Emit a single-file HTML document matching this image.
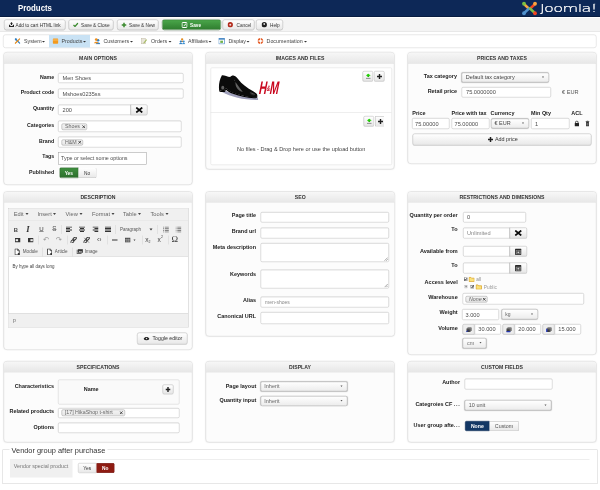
<!DOCTYPE html>
<html lang="en">
<head>
<meta charset="utf-8">
<title>Products</title>
<style>
*{box-sizing:border-box;margin:0;padding:0}
html,body{width:600px;height:490px;overflow:hidden;background:#fff}
body{font-family:"Liberation Sans",Arial,sans-serif;color:#333}
#cv{position:absolute;left:0;top:0;width:1200px;height:980px;transform:scale(.5);transform-origin:0 0;font-size:10.6px;line-height:1;background:#fff}
#cv *{position:absolute;white-space:nowrap}
.hdr{background:#0d2857;border-bottom:2px solid #081c40}
.ttl{font-size:16.6px;font-weight:bold;color:#fff;transform:scaleX(.945);transform-origin:0 0}
.sub{background:#f4f4f4;border-bottom:1px solid #dcdcdc}
.btn{border:1px solid #b0b0b0;border-radius:4.5px;background:linear-gradient(#fff,#e8e8e8);box-shadow:0 1px 1px rgba(0,0,0,.12);font-size:9.45px;color:#333;line-height:19px}
.btn.g{background:linear-gradient(#4aa64a,#2f7d2f);border-color:#2a6d2a;color:#fff;font-weight:bold}
.menu{background:#fff;border:1px solid #d0d0d0;border-radius:5px}
.mi{font-size:10.6px;color:#444}
.mhl{background:#c9e2f4}
.car{width:0;height:0;border-left:3px solid transparent;border-right:3px solid transparent;border-top:3.5px solid #333}
.pn{background:#fcfcfc;border:1px solid #cecece;border-radius:7px;box-shadow:0 0 3px rgba(0,0,0,.06)}
.ph{left:0;top:0;right:0;height:22.5px;background:linear-gradient(#f7f7f7,#e7e7e7);border-bottom:1px solid #cfcfcf;border-radius:6px 6px 0 0;text-align:center;font-weight:bold;font-size:10.3px;line-height:22.5px;color:#333}
.lb{font-weight:bold;color:#222;text-align:right}
.in{background:#fff;border:1px solid #bdbdbd;border-radius:3px;box-shadow:inset 0 1px 1px rgba(0,0,0,.06);font-size:11.3px;color:#4d4d4d;padding-left:8px}
.in.dk{border-color:#9a9a9a;border-radius:0}
.sel{background:linear-gradient(#fff,#ececec);border:1px solid #9c9c9c;border-radius:4px;font-size:11px;color:#444;padding-left:9px;box-shadow:0 0 2px rgba(0,0,0,.25)}
.sel i{right:9px;width:0;height:0;border-left:2.5px solid transparent;border-right:2.5px solid transparent;border-top:3.5px solid #555}
.ab{border:1px solid #b5b5b5;border-radius:0 3px 3px 0;background:linear-gradient(#fff,#e6e6e6);box-shadow:0 1px 1px rgba(0,0,0,.1)}
.tag{border:1px solid #999;border-radius:3px;background:linear-gradient(#f4f4f4,#e6e6e6);font-size:10.6px;color:#666;padding-left:6px}
.yn{border:1px solid #b9b9b9;background:linear-gradient(#fff,#e8e8e8);font-size:9.6px;color:#333;text-align:center}
.ib{background:#fff;border:1px solid #dcdcdc;border-radius:3px}
</style>
</head>
<body>
<div id="cv">
<div class="hdr" style="left:0px;top:0px;width:1200px;height:34px;"></div>
<div class="ttl" style="left:36px;top:9px">Products</div>
<svg style="left:1042px;top:2px" width="34" height="30" viewBox="0 0 34 30">
 <g fill="none" stroke-width="4.8" stroke-linecap="round">
  <path d="M8 8 L16 15.500" stroke="#f9a541"/><path d="M26 8 L18 15.500" stroke="#f44321"/>
  <path d="M8 22.500 L16 15" stroke="#5091cd"/><path d="M26 22.500 L18 15" stroke="#7ac143"/>
 </g>
 <circle cx="6" cy="5.500" r="3.800" fill="#7ac143"/><circle cx="28" cy="5.500" r="3.800" fill="#f9a541"/>
 <circle cx="6" cy="24.500" r="3.800" fill="#5091cd"/><circle cx="28" cy="24.500" r="3.800" fill="#f44321"/>
</svg>
<div style="left:1080px;top:6px;font-family:'DejaVu Sans Light','DejaVu Sans',sans-serif;font-weight:200;font-size:22px;color:#fff;letter-spacing:-.9px;-webkit-text-stroke:.45px #fff;transform:scaleX(1.47);transform-origin:0 0">Joomla!</div>
<div style="left:1187px;top:6px;font-size:5px;color:#fff">®</div>
<div class="sub" style="left:0px;top:36.4px;width:1200px;height:28px;"></div>
<div class="btn" style="left:8px;top:39px;width:123px;height:21px"><svg style="left:9px;top:4px" width="10" height="10" viewBox="0 0 10 10"><path d="M5 0l3 3.500H6V6H4V3.500H2z" fill="#222"/><path d="M0 5.500h2.500V8h5V5.500H10V10H0z" fill="#222"/></svg><span style="left:22px;top:0">Add to cart HTML link</span></div>
<div class="btn" style="left:137px;top:39px;width:90px;height:21px"><svg style="left:8px;top:5px" width="11" height="9" viewBox="0 0 11 9"><path d="M1 5l3 3 6-7" fill="none" stroke="#3a8a2e" stroke-width="2.4"/></svg><span style="left:24px;top:0">Save &amp; Close</span></div>
<div class="btn" style="left:234px;top:39px;width:83px;height:21px"><svg style="left:8px;top:5px" width="10" height="10" viewBox="0 0 10 10"><path d="M5 0v10M0 5h10" stroke="#3a8a2e" stroke-width="3"/></svg><span style="left:23px;top:0">Save &amp; New</span></div>
<div class="btn g" style="left:324px;top:39px;width:118px;height:21px"><svg style="left:38px;top:4px" width="12" height="12" viewBox="0 0 12 12"><rect x="1" y="1" width="10" height="10" rx="1.5" fill="none" stroke="#fff" stroke-width="2"/><path d="M4 7l5-5 1.500 1.500-5 5H4z" fill="#fff" stroke="#3a8a3a" stroke-width=".8"/></svg><span style="left:55px;top:0">Save</span></div>
<div class="btn" style="left:445px;top:39px;width:64px;height:21px"><svg style="left:9px;top:4px" width="11" height="11" viewBox="0 0 11 11"><circle cx="5.500" cy="5.500" r="5.300" fill="#b12a1c"/><circle cx="5.500" cy="5.500" r="2" fill="#f3d9d5"/></svg><span style="left:27px;top:0">Cancel</span></div>
<div class="btn" style="left:512px;top:39px;width:54px;height:21px"><svg style="left:10px;top:4px" width="11" height="11" viewBox="0 0 11 11"><circle cx="5.500" cy="5.500" r="5.300" fill="#222"/><circle cx="5.500" cy="4" r="1.800" fill="#ddd"/></svg><span style="left:27px;top:0">Help</span></div>
<div class="menu" style="left:6px;top:68.6px;width:1187px;height:27.4px;"></div>
<div class="mhl" style="left:98.4px;top:69.6px;width:81.6px;height:25.4px;"></div>
<svg style="left:29px;top:76px" width="12" height="12" viewBox="0 0 14 14"><path d="M3 3l9 9" stroke="#2f7fc4" stroke-width="3" stroke-linecap="round"/><path d="M12 2L3 11" stroke="#e28b1f" stroke-width="2.800" stroke-linecap="round"/><circle cx="3" cy="3" r="2.600" fill="#2f7fc4"/><circle cx="2" cy="12" r="1.600" fill="#e28b1f"/></svg>
<div class="mi" style="left:48px;top:77px">System</div><div class="car" style="left:84px;top:82px"></div>
<svg style="left:105px;top:76px" width="12" height="12" viewBox="0 0 13 13"><rect x=".5" y="1" width="12" height="11.500" rx="2" fill="#f39a1d"/><rect x=".5" y="3.600" width="12" height="1.400" fill="#ffd08a"/></svg>
<div class="mi" style="left:123px;top:77px">Products</div><div class="car" style="left:166px;top:82px"></div>
<svg style="left:188px;top:76px" width="12.500" height="12.500" viewBox="0 0 14 14"><circle cx="9" cy="5" r="3" fill="#2f7fc4"/><path d="M4 14c0-5.500 10-5.500 10 0z" fill="#2f7fc4"/><circle cx="5" cy="3.500" r="3" fill="#ef8f1c"/><path d="M0 12c0-5 10-5 10 0z" fill="#ef8f1c"/></svg>
<div class="mi" style="left:207px;top:77px">Customers</div><div class="car" style="left:260px;top:82px"></div>
<svg style="left:282px;top:76px" width="12.500" height="12.500" viewBox="0 0 14 14"><rect x="1" y="1" width="9" height="12" fill="#e9e6da" stroke="#b9b49c" stroke-width="1"/><path d="M5 11l7-8 1.500 1.500-7 8z" fill="#9db652"/></svg>
<div class="mi" style="left:302px;top:77px">Orders</div><div class="car" style="left:337px;top:82px"></div>
<svg style="left:358px;top:76px" width="12.500" height="12.500" viewBox="0 0 14 14"><circle cx="7" cy="3" r="2.600" fill="#e28b1f"/><path d="M3 9c0-4 8-4 8 0z" fill="#e28b1f"/><circle cx="4" cy="8" r="2.400" fill="#2f7fc4"/><path d="M0 14c0-4 8-4 8 0z" fill="#2f7fc4"/><circle cx="10.500" cy="8" r="2.400" fill="#3d8fd1"/><path d="M7 14c0-4 7-4 7 0z" fill="#3d8fd1"/></svg>
<div class="mi" style="left:376px;top:77px">Affiliates</div><div class="car" style="left:417px;top:82px"></div>
<svg style="left:437px;top:76px" width="12.500" height="12.500" viewBox="0 0 14 14"><rect x=".7" y=".7" width="12.600" height="12.600" fill="#fff" stroke="#3b7fc0" stroke-width="1.400"/><rect x=".7" y=".7" width="12.600" height="3" fill="#3b7fc0"/><rect x="4" y="6" width="6" height="5" fill="#6fb24a"/></svg>
<div class="mi" style="left:457px;top:77px">Display</div><div class="car" style="left:493px;top:82px"></div>
<svg style="left:515px;top:76px" width="12" height="12" viewBox="0 0 13 13"><circle cx="6.500" cy="6.500" r="4.600" fill="none" stroke="#e5602b" stroke-width="3.400"/><path d="M6.500 0v13M0 6.500h13" stroke="#fff" stroke-width="1.600"/></svg>
<div class="mi" style="left:533px;top:77px;letter-spacing:.1px">Documentation</div><div class="car" style="left:608px;top:82px"></div>
<div class="pn" style="left:7px;top:104px;width:378px;height:266px;"><div class="ph">MAIN OPTIONS</div></div>
<div class="lb" style="right:1091.6px;top:147.55px;font-size:10.5px;">Name</div>
<div class="in" style="left:116px;top:146px;width:251px;height:20px;line-height:18.0px;">Men Shoes</div>
<div class="lb" style="right:1091.6px;top:179.15px;font-size:10.5px;">Product code</div>
<div class="in" style="left:116px;top:177px;width:251px;height:20px;line-height:18.0px;">Mshoes0235ss</div>
<div class="lb" style="right:1091.6px;top:210.75px;font-size:10.5px;">Quantity</div>
<div class="in" style="left:116px;top:209px;width:146px;height:21px;line-height:19.0px;border-radius:3px 0 0 3px">200</div>
<div class="ab" style="left:261px;top:209px;width:34px;height:21px;"><svg style="left:9px;top:4px" width="15" height="12" viewBox="0 0 15 12"><path d="M1.500 1.200l12 9.600M13.500 1.200l-12 9.600" stroke="#0a0a0a" stroke-width="3.600"/></svg></div>
<div class="lb" style="right:1091.6px;top:244.15px;font-size:10.5px;">Categories</div>
<div class="in" style="left:116px;top:241px;width:247px;height:23px;line-height:21.0px;"></div>
<div class="tag" style="left:123px;top:247.4px;width:51px;height:12.6px;line-height:9.0px;">Shoes<svg style="right:2.500px;top:1.8px" width="7" height="7" viewBox="0 0 7 7"><path d="M.8.800l5.400 5.400M6.200.800L.8 6.200" stroke="#2a2a2a" stroke-width="1.500"/></svg></div>
<div class="lb" style="right:1091.6px;top:276.75px;font-size:10.5px;">Brand</div>
<div class="in" style="left:116px;top:273px;width:247px;height:22px;line-height:20.0px;"></div>
<div class="tag" style="left:123px;top:278.8px;width:43px;height:12.4px;line-height:8.8px;">H&amp;M<svg style="right:2.500px;top:1.7px" width="7" height="7" viewBox="0 0 7 7"><path d="M.8.800l5.400 5.400M6.200.800L.8 6.200" stroke="#2a2a2a" stroke-width="1.500"/></svg></div>
<div class="lb" style="right:1091.6px;top:307.15px;font-size:10.5px;">Tags</div>
<div class="in dk" style="left:116px;top:304px;width:176.6px;height:25px;line-height:23.0px;padding-left:5px;font-size:10.700px">Type or select some options</div>
<div class="lb" style="right:1091.6px;top:339.15px;font-size:10.5px;">Published</div>
<div class="yn" style="left:118.6px;top:335px;width:38px;height:21px;border-radius:3px 0 0 3px;background:linear-gradient(#3f8f3f,#2b6f2b);border-color:#245f24;color:#fff;font-weight:bold;line-height:19px">Yes</div>
<div class="yn" style="left:156.6px;top:335px;width:36px;height:21px;border-radius:0 3px 3px 0;border-left:0;line-height:19px">No</div>
<div class="pn" style="left:411px;top:104px;width:378px;height:235px;"><div class="ph">IMAGES AND FILES</div></div>
<div class="ib" style="left:420.6px;top:135px;width:363px;height:195px;"></div>
<div class="" style="left:421px;top:223.6px;width:362px;height:1px;background:#dcdcdc"></div>
<svg style="left:428px;top:140px" width="100" height="70" viewBox="0 0 600 420">
<defs><filter id="bl" x="-20%" y="-50%" width="140%" height="200%"><feGaussianBlur stdDeviation="9"/></filter><filter id="b2" x="-30%" y="-30%" width="160%" height="160%"><feGaussianBlur stdDeviation="7"/></filter></defs>
<path d="M120 240 C200 285 380 330 525 328 L530 360 C380 366 200 322 100 268Z" fill="#2a2a66" opacity=".45" filter="url(#bl)"/>
<path d="M95 62 C120 58 160 80 195 84 C205 72 220 64 240 68 C262 74 280 96 296 118 C330 165 390 212 470 256 C500 272 522 290 520 308 C518 326 500 332 480 330 C400 326 300 302 220 270 C180 252 150 225 136 216 C132 230 128 246 124 252 C100 254 75 250 62 244 C55 200 60 120 95 62Z" fill="#0b0b0b"/>
<ellipse cx="105" cy="212" rx="18" ry="22" fill="#9a9a9a" opacity=".6" filter="url(#b2)"/>
<path d="M262 150 C290 190 320 230 345 262 C320 262 285 240 268 205 C258 185 256 165 262 150Z" fill="#9a9a9a" opacity=".6" filter="url(#b2)"/>
<ellipse cx="462" cy="284" rx="34" ry="9" fill="#8a8a8a" opacity=".55" filter="url(#b2)" transform="rotate(24 462 284)"/>
<path d="M240 120l14 10M250 150l14 10" stroke="#888" stroke-width="7" opacity=".6"/>
<path d="M62 240 C75 250 100 254 124 250 C128 244 132 230 136 214 C150 225 180 250 220 268 C300 300 400 324 480 328 C500 330 516 324 520 308 C524 330 505 340 480 340 C400 336 300 314 215 282 C185 268 160 250 142 236 C138 250 134 262 128 264 C100 268 72 262 60 254Z" fill="#000"/>
</svg>
<div style="left:520px;top:157px;font-style:italic;font-weight:bold;font-size:36px;color:#c9081f;transform:scaleX(.6) skewX(-8deg);transform-origin:0 0;letter-spacing:-1px">H<span style="position:static;font-size:16px;letter-spacing:-1px;vertical-align:6px">&amp;</span>M</div>
<div class="ab" style="left:725px;top:142px;width:21px;height:20.6px;border-radius:3px"><svg style="left:5px;top:4px" width="11" height="11" viewBox="0 0 11 11"><path d="M5.500 0l5 4.500H8l-2.500 2.500L3 4.500H.5z" fill="#27d60a"/><path d="M2.500 4.500h6L5.500 7.500z" fill="#1fae08"/><rect x="1" y="8.800" width="9" height="1.600" fill="#777"/></svg></div>
<div class="ab" style="left:748px;top:142px;width:21px;height:20.6px;border-radius:3px"><svg style="left:5px;top:5px" width="10" height="10" viewBox="0 0 10 10"><path d="M5 0v10M0 5h10" stroke="#222" stroke-width="2.800"/></svg></div>
<div class="ab" style="left:727.4px;top:232px;width:21px;height:21px;border-radius:3px"><svg style="left:5px;top:4px" width="11" height="11" viewBox="0 0 11 11"><path d="M5.500 0l5 4.500H8l-2.500 2.500L3 4.500H.5z" fill="#27d60a"/><path d="M2.500 4.500h6L5.500 7.500z" fill="#1fae08"/><rect x="1" y="8.800" width="9" height="1.600" fill="#777"/></svg></div>
<div class="ab" style="left:750.4px;top:232px;width:18px;height:21px;border-radius:3px 0 0 3px;border-right:0"><svg style="left:5px;top:5px" width="10" height="10" viewBox="0 0 10 10"><path d="M5 0v10M0 5h10" stroke="#222" stroke-width="2.800"/></svg></div>
<div style="left:474px;top:293.05px;font-size:11.1px;color:#444;">No files - Drag &amp; Drop here or use the upload button</div>
<div class="pn" style="left:815px;top:104px;width:378px;height:224px;"><div class="ph">PRICES AND TAXES</div></div>
<div class="lb" style="right:286px;top:146.95px;font-size:10.9px;">Tax category</div>
<div class="sel" style="left:923px;top:145px;width:175px;height:20px;line-height:17.0px;padding-left:7.500px">Default tax category<i style="top:7.0px"></i></div>
<div class="lb" style="right:286px;top:176.55px;font-size:10.9px;">Retail price</div>
<div class="in" style="left:923px;top:174px;width:179px;height:21px;line-height:19.0px;">75.0000000</div>
<div style="left:1124px;top:178.35px;font-size:11.3px;color:#555;">€ EUR</div>
<div class="lb" style="left:824.6px;top:221.35px;font-size:10.9px;text-align:left;">Price</div>
<div class="lb" style="left:903px;top:221.35px;font-size:10.9px;text-align:left;">Price with tax</div>
<div class="lb" style="left:981px;top:221.35px;font-size:10.9px;text-align:left;">Currency</div>
<div class="lb" style="left:1062px;top:221.35px;font-size:10.9px;text-align:left;">Min Qty</div>
<div class="lb" style="left:1142.6px;top:221.35px;font-size:10.9px;text-align:left;">ACL</div>
<div class="in" style="left:824px;top:236px;width:75.4px;height:22px;line-height:20.0px;padding-left:5px">75.00000</div>
<div class="in" style="left:903px;top:236px;width:76px;height:22px;line-height:20.0px;padding-left:5px">75.00000</div>
<div class="sel" style="left:982px;top:236.6px;width:76px;height:20.8px;line-height:17.8px;padding-left:6px">€ EUR<i style="top:7.4px"></i></div>
<div class="in" style="left:1062px;top:236px;width:77px;height:22px;line-height:20.0px;padding-left:7px">1</div>
<svg style="left:1149px;top:241px" width="9.2" height="12" viewBox="0 0 9 12"><rect x="0" y="5" width="9" height="7" rx="1" fill="#222"/><path d="M2 5V3.500a2.500 2.500 0 0 1 5 0V5" fill="none" stroke="#222" stroke-width="1.600"/></svg>
<svg style="left:1171.2px;top:241px" width="8" height="12" viewBox="0 0 8 12"><rect x="1" y="3" width="6" height="9" rx="1" fill="#333"/><rect x="0" y="1.200" width="8" height="1.500" fill="#333"/><rect x="2.500" y="0" width="3" height="1.500" fill="#333"/><path d="M3 5v5M5 5v5" stroke="#ddd" stroke-width=".7"/></svg>
<div class="btn" style="left:825px;top:267.4px;width:358px;height:23.6px;line-height:21px"><svg style="left:150px;top:6px" width="10" height="10" viewBox="0 0 10 10"><path d="M5 0v10M0 5h10" stroke="#222" stroke-width="3"/></svg><span style="left:164px;top:0;font-size:10.8px">Add price</span></div>
<div class="pn" style="left:7px;top:382.5px;width:378px;height:317.5px;"><div class="ph">DESCRIPTION</div></div>
<div class="" style="left:16px;top:416px;width:360.6px;height:239.4px;background:#fff;border:1px solid #c4c4c4"></div>
<div class="" style="left:17px;top:417px;width:359px;height:97px;background:#f0f0f0;border-bottom:1px solid #d9d9d9"></div>
<div class="" style="left:17px;top:440px;width:359px;height:1px;background:#e2e2e2"></div>
<div class="" style="left:17px;top:626.6px;width:359px;height:28px;background:#f0f0f0;border-top:1px solid #c9c9c9"></div>
<div style="left:27.5px;top:421.9px;font-size:11.4px;color:#666;">Edit</div>
<div class="car" style="left:50.9px;top:426px;border-top-color:#444;border-left-width:3px;border-right-width:3px;border-top-width:4px"></div>
<div style="left:75px;top:421.9px;font-size:11.4px;color:#666;">Insert</div>
<div class="car" style="left:106px;top:426px;border-top-color:#444;border-left-width:3px;border-right-width:3px;border-top-width:4px"></div>
<div style="left:131px;top:421.9px;font-size:11.4px;color:#666;">View</div>
<div class="car" style="left:158.6px;top:426px;border-top-color:#444;border-left-width:3px;border-right-width:3px;border-top-width:4px"></div>
<div style="left:184px;top:421.9px;font-size:11.4px;color:#666;">Format</div>
<div class="car" style="left:223px;top:426px;border-top-color:#444;border-left-width:3px;border-right-width:3px;border-top-width:4px"></div>
<div style="left:246px;top:421.9px;font-size:11.4px;color:#666;">Table</div>
<div class="car" style="left:276px;top:426px;border-top-color:#444;border-left-width:3px;border-right-width:3px;border-top-width:4px"></div>
<div style="left:301px;top:421.9px;font-size:11.4px;color:#666;">Tools</div>
<div class="car" style="left:330.6px;top:426px;border-top-color:#444;border-left-width:3px;border-right-width:3px;border-top-width:4px"></div>
<div style="left:27.6px;top:452.8px;font-size:11.6px;color:#444;font-weight:bold">B</div>
<div style="left:52.4px;top:449.4px;font-size:17.2px;color:#333;font-style:italic;font-family:'Liberation Serif',serif;font-weight:bold">I</div>
<div style="left:78.4px;top:451.9px;font-size:12.2px;color:#333;text-decoration:underline;text-decoration-thickness:.7px;text-underline-offset:1px">U</div>
<div style="left:104.4px;top:451.9px;font-size:12.6px;color:#555;text-decoration:line-through;text-decoration-thickness:.7px">S</div>
<div class="" style="left:121.5px;top:449.6px;width:1px;height:18px;background:#d3d3d3"></div>
<svg style="left:132px;top:453.1px" width="12" height="11" viewBox="0 0 6 5.500"><rect x="0" y="0.0" width="6" height="1" fill="#333"/><rect x="0" y="1.5" width="4" height="1" fill="#333"/><rect x="0" y="3.0" width="6" height="1" fill="#333"/><rect x="0" y="4.5" width="4" height="1" fill="#333"/></svg>
<svg style="left:158px;top:453.1px" width="12" height="11" viewBox="0 0 6 5.500"><rect x="0" y="0.0" width="6" height="1" fill="#333"/><rect x="1" y="1.5" width="4" height="1" fill="#333"/><rect x="0" y="3.0" width="6" height="1" fill="#333"/><rect x="1" y="4.5" width="4" height="1" fill="#333"/></svg>
<svg style="left:184.6px;top:453.1px" width="12" height="11" viewBox="0 0 6 5.500"><rect x="0" y="0.0" width="6" height="1" fill="#333"/><rect x="2" y="1.5" width="4" height="1" fill="#333"/><rect x="0" y="3.0" width="6" height="1" fill="#333"/><rect x="2" y="4.5" width="4" height="1" fill="#333"/></svg>
<svg style="left:210px;top:453.1px" width="12" height="11" viewBox="0 0 6 5.500"><rect x="0" y="0.0" width="6" height="1" fill="#333"/><rect x="0" y="1.5" width="6" height="1" fill="#333"/><rect x="0" y="3.0" width="6" height="1" fill="#333"/><rect x="0" y="4.5" width="6" height="1" fill="#333"/></svg>
<div class="" style="left:230.5px;top:449.6px;width:1px;height:18px;background:#d3d3d3"></div>
<div style="left:240px;top:454.1px;font-size:9px;color:#555;">Paragraph</div>
<div class="car" style="left:299.2px;top:456.8px;border-left-width:3.200px;border-right-width:3.200px;border-top-width:4px;border-top-color:#333"></div>
<div class="" style="left:313.5px;top:449.6px;width:1px;height:18px;background:#d3d3d3"></div>
<svg style="left:326px;top:452.6px" width="11.6" height="12.2" viewBox="0 0 5.800 6.100"><rect x="0" y="0.0" width="1" height="1" fill="#888"/><rect x="1.800" y="0.0" width="4" height="1" fill="#777"/><rect x="0" y="1.7" width="1" height="1" fill="#888"/><rect x="1.800" y="1.7" width="4" height="1" fill="#777"/><rect x="0" y="3.4" width="1" height="1" fill="#888"/><rect x="1.800" y="3.4" width="4" height="1" fill="#777"/><rect x="0" y="5.1" width="1" height="1" fill="#888"/><rect x="1.800" y="5.1" width="4" height="1" fill="#777"/></svg>
<svg style="left:351px;top:452.6px" width="11.6" height="12.2" viewBox="0 0 5.800 6.100"><rect x="0" y="0.0" width="1" height="1" fill="#888"/><rect x="1.800" y="0.0" width="4" height="1" fill="#777"/><rect x="0" y="1.7" width="1" height="1" fill="#888"/><rect x="1.800" y="1.7" width="4" height="1" fill="#777"/><rect x="0" y="3.4" width="1" height="1" fill="#888"/><rect x="1.800" y="3.4" width="4" height="1" fill="#777"/><rect x="0" y="5.1" width="1" height="1" fill="#888"/><rect x="1.800" y="5.1" width="4" height="1" fill="#777"/></svg>
<svg style="left:30px;top:475.5px" width="11" height="9" viewBox="0 0 5.500 4.500"><rect x="0" y="0" width="5.500" height="4.500" fill="#333"/><rect x=".7" y="1.200" width="2.400" height="2" fill="#eee"/></svg>
<svg style="left:56.4px;top:475.5px" width="11" height="9" viewBox="0 0 5.500 4.500"><rect x="0" y="0" width="5.500" height="4.500" fill="#333"/><rect x="2.400" y="1.200" width="2.400" height="2" fill="#eee"/></svg>
<div class="" style="left:77.1px;top:471px;width:1px;height:18px;background:#d3d3d3"></div>
<div style="left:86px;top:471.8px;font-size:14.8px;color:#999;font-family:'DejaVu Sans',sans-serif">↶</div>
<div style="left:111.6px;top:471.8px;font-size:14.8px;color:#999;font-family:'DejaVu Sans',sans-serif">↷</div>
<div class="" style="left:133.5px;top:471px;width:1px;height:18px;background:#d3d3d3"></div>
<svg style="left:141.2px;top:473.6px" width="12.4" height="12.8" viewBox="0 0 10 10"><path d="M4 6l2-2" stroke="#333" stroke-width="1.600"/><rect x="5" y="-.5" width="3.600" height="6" rx="1.800" transform="rotate(45 6.800 2.500)" fill="none" stroke="#333" stroke-width="1.600"/><rect x="1" y="4.200" width="3.600" height="6" rx="1.800" transform="rotate(45 2.800 7.200)" fill="none" stroke="#333" stroke-width="1.600"/></svg>
<svg style="left:167.2px;top:473.6px" width="12.4" height="12.8" viewBox="0 0 10 10"><rect x="5" y="-.5" width="3.600" height="6" rx="1.800" transform="rotate(45 6.800 2.500)" fill="none" stroke="#333" stroke-width="1.600"/><rect x="1" y="4.200" width="3.600" height="6" rx="1.800" transform="rotate(45 2.800 7.200)" fill="none" stroke="#333" stroke-width="1.600"/><path d="M1 1l8 8" stroke="#555" stroke-width="1"/></svg>
<div style="left:194px;top:472.6px;font-size:13.2px;color:#444;letter-spacing:.2px">‹›</div>
<div class="" style="left:214.5px;top:471px;width:1px;height:18px;background:#d3d3d3"></div>
<div class="" style="left:223.6px;top:479.2px;width:11.6px;height:2px;background:#333"></div>
<svg style="left:250px;top:474.8px" width="11.2" height="10.4" viewBox="0 0 11 10"><rect x="0" y="0" width="11" height="10" fill="#444"/><path d="M0 3.500h11M0 6.700h11M3.700 2v8M7.400 2v8" stroke="#ddd" stroke-width=".8"/></svg>
<div class="car" style="left:267px;top:478.6px;border-left-width:2.500px;border-right-width:2.500px;border-top-color:#444"></div>
<div class="" style="left:283.5px;top:471px;width:1px;height:18px;background:#d3d3d3"></div>
<div style="left:290.4px;top:472px;font-size:13.2px;color:#444;">x<span style="font-size:7px;top:7px;position:absolute">2</span></div>
<div style="left:315.2px;top:473.4px;font-size:13.2px;color:#444;">x<span style="font-size:7px;top:-3px;position:absolute">2</span></div>
<div class="" style="left:335.9px;top:471px;width:1px;height:18px;background:#d3d3d3"></div>
<div style="left:343.2px;top:470.2px;font-size:17.6px;color:#333;font-family:'Liberation Serif',serif">Ω</div>
<svg style="left:29.2px;top:496.6px" width="10.4" height="13.6" viewBox="0 0 9 12"><path d="M.7.700h4.800l2.800 2.800v7.800H.7z" fill="#fff" stroke="#333" stroke-width="1.500"/><path d="M5.300.700v3h3" fill="none" stroke="#333" stroke-width="1.200"/><rect x="5.800" y="8" width="3" height="3.500" fill="#333"/></svg>
<div style="left:45.6px;top:499.2px;font-size:9.2px;color:#555;">Module</div>
<div class="" style="left:83.5px;top:494.6px;width:1px;height:18px;background:#d3d3d3"></div>
<svg style="left:93.6px;top:496.6px" width="10.4" height="13.6" viewBox="0 0 9 12"><path d="M.7.700h4.800l2.800 2.800v7.800H.7z" fill="#fff" stroke="#333" stroke-width="1.500"/><path d="M5.300.700v3h3" fill="none" stroke="#333" stroke-width="1.200"/><rect x="5.800" y="8" width="3" height="3.500" fill="#333"/></svg>
<div style="left:109.6px;top:499.2px;font-size:9.2px;color:#555;">Article</div>
<div class="" style="left:144.5px;top:494.6px;width:1px;height:18px;background:#d3d3d3"></div>
<svg style="left:152.6px;top:498.4px" width="13.2" height="10" viewBox="0 0 13 10"><rect x="0" y="1.500" width="10" height="8.500" fill="#444"/><rect x="2.500" y="0" width="10.500" height="8" fill="#333" stroke="#f0f0f0" stroke-width=".8"/><path d="M4 6.500l2.500-3 2 2 1.500-1 1.500 2z" fill="#ddd"/></svg>
<div style="left:169.6px;top:499.2px;font-size:9.2px;color:#555;">Image</div>
<div style="left:25px;top:528.15px;font-size:8.9px;color:#444;">By hype all days long</div>
<div style="left:26px;top:636px;font-size:10px;color:#666;">p</div>
<div class="btn" style="left:274px;top:665px;width:101.4px;height:24px;line-height:22px"><svg style="left:12px;top:8px" width="12" height="7" viewBox="0 0 12 7"><path d="M0 3.500C3-1 9-1 12 3.500 9 8 3 8 0 3.500z" fill="#222"/><circle cx="6" cy="3" r="1.500" fill="#ddd"/></svg><span style="left:30px;top:0;font-size:10.4px">Toggle editor</span></div>
<div class="pn" style="left:411px;top:382.5px;width:379px;height:290px;"><div class="ph">SEO</div></div>
<div class="lb" style="right:688px;top:424.95px;font-size:10.9px;">Page title</div>
<div class="in" style="left:521px;top:423.5px;width:256.6px;height:21.5px;line-height:19.5px;"></div>
<div class="lb" style="right:688px;top:456.55px;font-size:10.9px;">Brand url</div>
<div class="in" style="left:521px;top:455px;width:256.6px;height:21.5px;line-height:19.5px;"></div>
<div class="lb" style="right:688px;top:487.95px;font-size:10.9px;">Meta description</div>
<div class="in" style="left:521px;top:486.4px;width:256.6px;height:37.6px;line-height:35.6px;"><svg style="right:1px;bottom:1px" width="8" height="8" viewBox="0 0 8 8"><path d="M7.500 1L1 7.500M7.500 4.500L4.500 7.500" stroke="#555" stroke-width="1"/></svg></div>
<div class="lb" style="right:688px;top:541.55px;font-size:10.9px;">Keywords</div>
<div class="in" style="left:521px;top:539px;width:256.6px;height:38.2px;line-height:36.2px;"><svg style="right:1px;bottom:1px" width="8" height="8" viewBox="0 0 8 8"><path d="M7.500 1L1 7.500M7.500 4.500L4.500 7.500" stroke="#555" stroke-width="1"/></svg></div>
<div class="lb" style="right:688px;top:594.95px;font-size:10.9px;">Alias</div>
<div class="in" style="left:521px;top:592.5px;width:256.6px;height:22.5px;line-height:20.5px;color:#888;font-size:10px">men-shoes</div>
<div class="lb" style="right:688px;top:626.55px;font-size:10.9px;">Canonical URL</div>
<div class="in" style="left:521px;top:624px;width:256.6px;height:23.5px;line-height:21.5px;"></div>
<div class="pn" style="left:815px;top:382.5px;width:378px;height:327.5px;"><div class="ph">RESTRICTIONS AND DIMENSIONS</div></div>
<div class="lb" style="right:284.6px;top:424.88px;font-size:11.04px;">Quantity per order</div>
<div class="in" style="left:926px;top:423.5px;width:126px;height:21.5px;line-height:19.5px;padding-left:7px">0</div>
<div class="lb" style="right:284.6px;top:451.88px;font-size:11.04px;">To</div>
<div class="in" style="left:926px;top:455px;width:94px;height:21.5px;line-height:19.5px;border-radius:3px 0 0 3px;padding-left:7px;color:#888">Unlimited</div>
<div class="ab" style="left:1019px;top:455px;width:35px;height:21.5px;"><svg style="left:9px;top:4px" width="15" height="12" viewBox="0 0 15 12"><path d="M1.500 1.200l12 9.600M13.500 1.200l-12 9.600" stroke="#0a0a0a" stroke-width="3.600"/></svg></div>
<div class="lb" style="right:284.6px;top:496.48px;font-size:11.04px;">Available from</div>
<div class="in" style="left:926px;top:491.5px;width:94px;height:21px;line-height:19.0px;border-radius:3px 0 0 3px"></div>
<div class="ab" style="left:1019px;top:491.5px;width:35px;height:21px;"><svg style="left:10px;top:4px" width="13" height="13" viewBox="0 0 13 13"><rect x="0" y="0" width="13" height="13" rx="1.500" fill="#2b2b2b"/><rect x="1.500" y="3.500" width="10" height="8" fill="#9a9a9a"/><path d="M1.500 6.200h10M1.500 8.800h10M4.800 3.500v8M8.200 3.500v8" stroke="#2b2b2b" stroke-width=".9"/><rect x="5.200" y="6.600" width="2.700" height="1.900" fill="#fff"/></svg></div>
<div class="lb" style="right:284.6px;top:523.88px;font-size:11.04px;">To</div>
<div class="in" style="left:926px;top:525px;width:94px;height:21.5px;line-height:19.5px;border-radius:3px 0 0 3px"></div>
<div class="ab" style="left:1019px;top:525px;width:35px;height:21.5px;"><svg style="left:10px;top:4px" width="13" height="13" viewBox="0 0 13 13"><rect x="0" y="0" width="13" height="13" rx="1.500" fill="#2b2b2b"/><rect x="1.500" y="3.500" width="10" height="8" fill="#9a9a9a"/><path d="M1.500 6.200h10M1.500 8.800h10M4.800 3.500v8M8.200 3.500v8" stroke="#2b2b2b" stroke-width=".9"/><rect x="5.200" y="6.600" width="2.700" height="1.900" fill="#fff"/></svg></div>
<div class="lb" style="right:284.6px;top:558.88px;font-size:11.04px;">Access level</div>
<svg style="left:928px;top:555.2px" width="7.2" height="7.2" viewBox="0 0 7 7"><rect x=".4" y=".4" width="6.200" height="6.200" fill="#fff" stroke="#333" stroke-width="1"/><path d="M1.500 3.500l1.500 1.700L5.600 1.500" fill="none" stroke="#000" stroke-width="1.600"/></svg>
<svg style="left:936.6px;top:553.2px" width="12.6" height="10.8" viewBox="0 0 10 9"><path d="M.6 1.500h3.200l1 1.300h4.600v5.600H.6z" fill="#fbe27a" stroke="#d79b1c" stroke-width="1.100"/></svg>
<div style="left:952.6px;top:554.6px;font-size:9.2px;color:#888;">all</div>
<svg style="left:928.6px;top:570.4px" width="6.4" height="6.4" viewBox="0 0 7 7"><rect x=".4" y=".4" width="6.200" height="6.200" fill="#fff" stroke="#777" stroke-width=".8"/><path d="M1.500 3.500h4M3.500 1.500v4" stroke="#444" stroke-width="1"/></svg>
<svg style="left:941.2px;top:570px" width="7.2" height="7.2" viewBox="0 0 7 7"><rect x=".4" y=".4" width="6.200" height="6.200" fill="#fff" stroke="#333" stroke-width="1"/><path d="M1.500 3.500l1.500 1.700L5.600 1.500" fill="none" stroke="#000" stroke-width="1.600"/></svg>
<svg style="left:950.6px;top:568px" width="13.2" height="11.2" viewBox="0 0 10 9"><path d="M.6 1.500h3.200l1 1.300h4.600v5.600H.6z" fill="#fbe27a" stroke="#d79b1c" stroke-width="1.100"/></svg>
<div style="left:967.6px;top:569px;font-size:9.6px;color:#999;">Public</div>
<div class="lb" style="right:284.6px;top:587.88px;font-size:11.04px;">Warehouse</div>
<div class="in" style="left:925px;top:586px;width:242.6px;height:23px;line-height:21.0px;"></div>
<div class="tag" style="left:931px;top:591.6px;width:44px;height:13.2px;line-height:9.6px;"><i style="position:static;font-style:italic">None</i><svg style="right:2.500px;top:2.1px" width="7" height="7" viewBox="0 0 7 7"><path d="M.8.800l5.400 5.400M6.200.800L.8 6.200" stroke="#2a2a2a" stroke-width="1.500"/></svg></div>
<div class="lb" style="right:284.6px;top:618.48px;font-size:11.04px;">Weight</div>
<div class="in" style="left:924px;top:617.5px;width:73.6px;height:22.5px;line-height:20.5px;padding-left:6px">3.000</div>
<div class="sel" style="left:1002.6px;top:618px;width:73.4px;height:21.4px;line-height:18.4px;padding-left:7px;color:#666;font-size:10px">kg<i style="top:7.7px"></i></div>
<div class="lb" style="right:284.6px;top:650.48px;font-size:11.04px;">Volume</div>
<div class="ab" style="left:925px;top:647.5px;width:24px;height:21.5px;border-radius:3px 0 0 3px;background:#eee"><svg style="left:6px;top:5px" width="12" height="11" viewBox="0 0 12 11"><path d="M1 3.500l2.500-2.500h7.500v6l-2.500 3H1z" fill="#3c3c3c"/><path d="M1 3.500h7.500v6.500M8.500 3.500L11 1" fill="none" stroke="#cfcfcf" stroke-width=".9"/><path d="M.8 10.200L3.600 7" stroke="#1f35d6" stroke-width="2"/></svg></div>
<div class="in" style="left:948.6px;top:647.5px;width:53px;height:21.5px;line-height:19.5px;border-radius:0 3px 3px 0;padding-left:7px">30.000</div>
<div class="ab" style="left:1005px;top:647.5px;width:24px;height:21.5px;border-radius:3px 0 0 3px;background:#eee"><svg style="left:6px;top:5px" width="12" height="11" viewBox="0 0 12 11"><path d="M1 3.500l2.500-2.500h7.500v6l-2.500 3H1z" fill="#3c3c3c"/><path d="M1 3.500h7.500v6.500M8.500 3.500L11 1" fill="none" stroke="#cfcfcf" stroke-width=".9"/><path d="M1 9.800h7.500" stroke="#1f35d6" stroke-width="2.200"/></svg></div>
<div class="in" style="left:1028.6px;top:647.5px;width:53px;height:21.5px;line-height:19.5px;border-radius:0 3px 3px 0;padding-left:7px">20.000</div>
<div class="ab" style="left:1085px;top:647.5px;width:24px;height:21.5px;border-radius:3px 0 0 3px;background:#eee"><svg style="left:6px;top:5px" width="12" height="11" viewBox="0 0 12 11"><path d="M1 3.500l2.500-2.500h7.500v6l-2.500 3H1z" fill="#3c3c3c"/><path d="M1 3.500h7.500v6.500M8.500 3.500L11 1" fill="none" stroke="#cfcfcf" stroke-width=".9"/><path d="M1.600 3.500v6.500" stroke="#1f35d6" stroke-width="2.200"/></svg></div>
<div class="in" style="left:1108.6px;top:647.5px;width:53px;height:21.5px;line-height:19.5px;border-radius:0 3px 3px 0;padding-left:7px">15.000</div>
<div class="sel" style="left:925px;top:676px;width:47.6px;height:20.6px;line-height:17.6px;padding-left:8px;color:#777">cm<i style="top:7.3px"></i></div>
<div class="pn" style="left:7px;top:721.5px;width:378px;height:163px;"><div class="ph">SPECIFICATIONS</div></div>
<div class="lb" style="right:1092px;top:765.95px;font-size:10.9px;">Characteristics</div>
<div class="" style="left:116px;top:758.5px;width:243px;height:50px;background:#fafafa;border:1px solid #cfcfcf;border-radius:3px"></div>
<div class="lb" style="left:167.5px;top:771.55px;font-size:10.9px;text-align:left;">Name</div>
<div class="ab" style="left:325px;top:768.5px;width:21.6px;height:19.1px;border-radius:3px"><svg style="left:5px;top:4px" width="10" height="10" viewBox="0 0 10 10"><path d="M5 0v10M0 5h10" stroke="#222" stroke-width="2.800"/></svg></div>
<div class="lb" style="right:1092px;top:816.55px;font-size:10.9px;">Related products</div>
<div class="in" style="left:116px;top:816px;width:243px;height:20.4px;line-height:18.4px;"></div>
<div class="tag" style="left:122.6px;top:819.2px;width:127.4px;height:13.2px;line-height:9.6px;padding-left:6px">[17] HikaShop t-shirt<svg style="right:2.500px;top:2.1px" width="7" height="7" viewBox="0 0 7 7"><path d="M.8.800l5.400 5.400M6.200.800L.8 6.200" stroke="#2a2a2a" stroke-width="1.500"/></svg></div>
<div class="lb" style="right:1092px;top:847.55px;font-size:10.9px;">Options</div>
<div class="in" style="left:116px;top:845px;width:243px;height:21px;line-height:19.0px;"></div>
<div class="pn" style="left:411px;top:721.5px;width:378px;height:163px;"><div class="ph">DISPLAY</div></div>
<div class="lb" style="right:687.4px;top:765.55px;font-size:10.9px;">Page layout</div>
<div class="sel" style="left:521px;top:762.6px;width:174px;height:20.4px;line-height:17.4px;padding-left:6.500px;color:#666">Inherit<i style="top:7.2px"></i></div>
<div class="lb" style="right:687.4px;top:794.55px;font-size:10.9px;">Quantity input</div>
<div class="sel" style="left:521px;top:792px;width:174px;height:19.8px;line-height:16.8px;padding-left:6.500px;color:#666">Inherit<i style="top:6.9px"></i></div>
<div class="pn" style="left:815px;top:721.5px;width:378px;height:163.5px;"><div class="ph">CUSTOM FIELDS</div></div>
<div class="lb" style="right:280px;top:757.95px;font-size:10.9px;">Author</div>
<div class="in" style="left:928.5px;top:756.5px;width:176.5px;height:22.5px;line-height:20.5px;"></div>
<div class="lb" style="right:279.4px;top:802.55px;font-size:10.9px;">Categroies CF <span style="position:static;letter-spacing:1.300px">...</span></div>
<div class="sel" style="left:928.5px;top:800px;width:174.1px;height:21px;line-height:18.0px;padding-left:8px;color:#555">10 unit<i style="top:7.5px"></i></div>
<div class="lb" style="right:279.4px;top:843.95px;font-size:10.9px;">User group afte<span style="position:static;letter-spacing:1.300px">...</span></div>
<div class="yn" style="left:930px;top:841.5px;width:49.4px;height:20.3px;border-radius:3px 0 0 3px;background:#123765;border-color:#0c2a52;color:#fff;font-weight:bold;line-height:18.500px;font-size:10.300px">None</div>
<div class="yn" style="left:979.4px;top:841.5px;width:58.2px;height:20.3px;border-radius:0 3px 3px 0;border-left:0;line-height:18.500px;color:#555;font-size:10.600px">Custom</div>
<div class="" style="left:5px;top:899px;width:1190.4px;height:69.4px;border:1px solid #cfcfcf"></div>
<div style="left:19px;top:891px;height:18px;background:#fff;padding:0 4px;font-size:14.8px;line-height:18px;color:#333">Vendor group after purchase</div>
<div class="" style="left:20px;top:918px;width:1159.4px;height:1px;background:#dcdcdc"></div>
<div class="" style="left:20px;top:919px;width:125px;height:36px;background:#f0f0f0"></div>
<div style="left:27.5px;top:927.25px;font-size:10.7px;color:#777;">Vendor special product</div>
<div class="yn" style="left:156px;top:926px;width:36.6px;height:20px;border-radius:3px 0 0 3px;line-height:18px">Yes</div>
<div class="yn" style="left:192.6px;top:926px;width:36.4px;height:20px;border-radius:0 3px 3px 0;border-left:0;background:#8e1b12;border-color:#6e130c;color:#fff;font-weight:bold;line-height:18px">No</div>
</div>
</body>
</html>
